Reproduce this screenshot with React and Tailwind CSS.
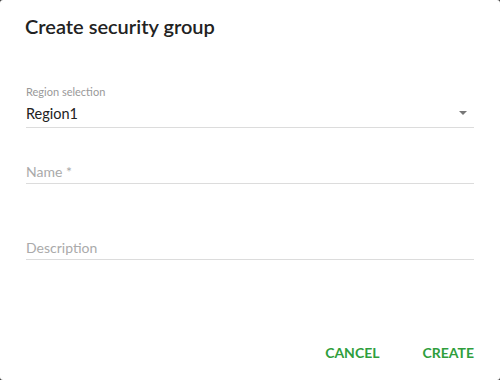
export default function App() {
  return (
    <div className="w-[500px] h-[380px] bg-[#3a3a3a]" style={{ fontFamily: "Lato, 'Open Sans', sans-serif" }}>
      <div className="w-[500px] h-[380px] bg-white rounded-[3px] flex flex-col">
        <div className="pl-[25px] pt-[13px] h-[50px] text-[20px] font-semibold text-[#222] leading-[26px]">Create security group</div>
        <div className="px-[26px] pt-[35px] flex flex-col">
          <div className="text-[11px] text-[#999] leading-[14px] h-[14px]">Region selection</div>
          <div className="relative h-[29px] border-b border-[#dcdcdc] flex items-center">
            <span className="text-[14.5px] text-[#222] mt-[1px]">Region1</span>
            <svg className="absolute right-[7px] top-[12px]" width="8" height="4" viewBox="0 0 8 4"><path d="M0 0h8L4 4z" fill="#777" /></svg>
          </div>
          <div className="h-[56px] border-b border-[#dcdcdc] flex items-end pb-[1px]">
            <span className="text-[14px] text-[#aaa]">Name *</span>
          </div>
          <div className="h-[76px] border-b border-[#dcdcdc] flex items-end pb-[1px]">
            <span className="text-[14px] text-[#aaa]">Description</span>
          </div>
        </div>
        <div className="mt-auto flex justify-end gap-[43px] pr-[26px] pb-[17px]">
          <span className="text-[14px] font-bold text-[#2f9e3c]">CANCEL</span>
          <span className="text-[14px] font-bold text-[#2f9e3c]">CREATE</span>
        </div>
      </div>
    </div>
  );
}
